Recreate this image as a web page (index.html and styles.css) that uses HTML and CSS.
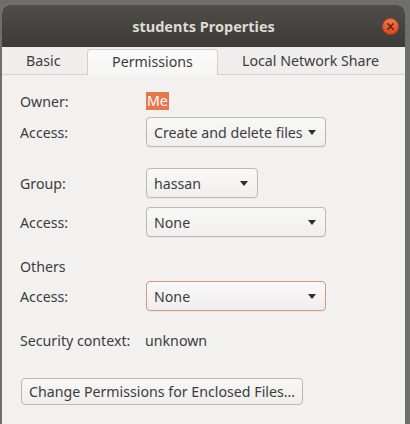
FILE: index.html
```html
<!DOCTYPE html>
<html>
<head>
<meta charset="utf-8">
<link rel="stylesheet" href="styles.css">
</head>
<body>
<div class="window">
  <div class="titlebar">
    <span class="title">students Properties</span>
    <span class="close">
      <svg width="17" height="17" viewBox="0 0 17 17">
        <defs>
          <linearGradient id="cg" x1="0" y1="0" x2="0" y2="1">
            <stop offset="0" stop-color="#f07a4a"/>
            <stop offset="1" stop-color="#d9471f"/>
          </linearGradient>
        </defs>
        <circle cx="8.5" cy="8.5" r="8" fill="url(#cg)" stroke="#b5401d" stroke-width="0.8"/>
        <path d="M5.8 5.8 L11.2 11.2 M11.2 5.8 L5.8 11.2" stroke="#5a2010" stroke-width="1.4" stroke-linecap="round"/>
      </svg>
    </span>
  </div>
  <div class="tabs">
    <div class="tab tab-basic">Basic</div>
    <div class="tab tab-active">Permissions</div>
    <div class="tab tab-share">Local Network Share</div>
  </div>
  <div class="content">
    <div class="row row-owner">
      <span class="label">Owner:</span>
      <span class="me">Me</span>
    </div>
    <div class="row row-access1">
      <span class="label">Access:</span>
      <div class="combo combo-wide"><span>Create and delete files</span><span class="arrow"></span></div>
    </div>
    <div class="row row-group">
      <span class="label">Group:</span>
      <div class="combo combo-group"><span>hassan</span><span class="arrow"></span></div>
    </div>
    <div class="row row-access2">
      <span class="label">Access:</span>
      <div class="combo combo-full"><span>None</span><span class="arrow"></span></div>
    </div>
    <div class="row row-others">
      <span class="label">Others</span>
    </div>
    <div class="row row-access3">
      <span class="label">Access:</span>
      <div class="combo combo-full combo-focus"><span>None</span><span class="arrow"></span></div>
    </div>
    <div class="row row-security">
      <span class="label label-sec">Security context:</span>
      <span class="value">unknown</span>
    </div>
    <div class="row row-button">
      <button class="btn">Change Permissions for Enclosed Files…</button>
    </div>
  </div>
</div>
</body>
</html>
```
FILE: styles.css
```css
html, body {
  margin: 0;
  padding: 0;
  height: 100%;
}
body {
  background: #6e6e6e;
  font-family: "Noto Sans", "Open Sans", sans-serif;
  font-size: 14.2px;
  color: #3c3c3c;
  overflow: hidden;
}
.window {
  margin: 5px 5px 0 2px;
  height: 419px;
  border-radius: 7px 7px 0 0;
  overflow: hidden;
  background: #f2f1f0;
  display: flex;
  flex-direction: column;
}
.titlebar {
  height: 42px;
  background: linear-gradient(#4f4e49, #3b3a36);
  display: flex;
  align-items: center;
  justify-content: center;
  position: relative;
}
.title {
  color: #dfdbd2;
  font-weight: bold;
  font-size: 14.5px;
}
.close {
  position: absolute;
  right: 6px;
  top: 13px;
  width: 17px;
  height: 17px;
}
.close svg { display: block; }
.tabs {
  height: 27px;
  background: #efeeed;
  border-bottom: 1px solid #d6d3cf;
  display: flex;
  align-items: flex-end;
}
.tab {
  height: 25px;
  line-height: 24px;
  color: #3c3c3c;
}
.tab-basic {
  margin-left: 24px;
  width: 61px;
}
.tab-active {
  width: 129px;
  text-align: center;
  background: linear-gradient(#fbfbfb, #f6f6f5);
  border: 1px solid #d3d0cc;
  border-bottom: none;
  border-radius: 4px 4px 0 0;
  margin-bottom: -1px;
}
.tab-share {
  margin-left: 24px;
}
.content {
  padding: 16px 18px 0 18px;
  display: flex;
  flex-direction: column;
}
.row {
  display: flex;
  align-items: center;
}
.label {
  width: 126px;
  flex: none;
}
.label-sec {
  width: 125px;
}
.row-owner { height: 20px; }
.me {
  background: #e9764a;
  color: #ffffff;
  line-height: 18px;
  padding: 0 1px;
}
.row-access1 { margin-top: 6px; }
.row-group { margin-top: 21px; }
.row-access2 { margin-top: 9px; }
.row-others { margin-top: 19px; height: 20px; }
.row-access3 { margin-top: 5px; }
.row-security { margin-top: 19px; height: 20px; }
.row-button { margin-top: 28px; }
.combo {
  box-sizing: border-box;
  height: 30px;
  border: 1px solid #bdb8b2;
  border-radius: 4px;
  background: linear-gradient(#f8f8f7, #f0efee);
  display: flex;
  align-items: center;
  justify-content: space-between;
  padding: 0 9px 0 7px;
  box-shadow: 0 1px 0 rgba(0,0,0,0.04);
}
.combo-wide { width: 180px; }
.combo-group { width: 112px; }
.combo-full { width: 180px; }
.combo-focus { border-color: #d8967a; }
.arrow {
  width: 0;
  height: 0;
  border-left: 4.5px solid transparent;
  border-right: 4.5px solid transparent;
  border-top: 5px solid #2e2e2e;
}
.btn {
  font-family: inherit;
  font-size: 14.2px;
  color: #3c3c3c;
  height: 27px;
  width: 282px;
  margin-left: 1px;
  border: 1px solid #bdb8b2;
  border-radius: 4px;
  background: linear-gradient(#f8f8f7, #efeeed);
  padding: 0 4px;
  text-align: center;
}
```
